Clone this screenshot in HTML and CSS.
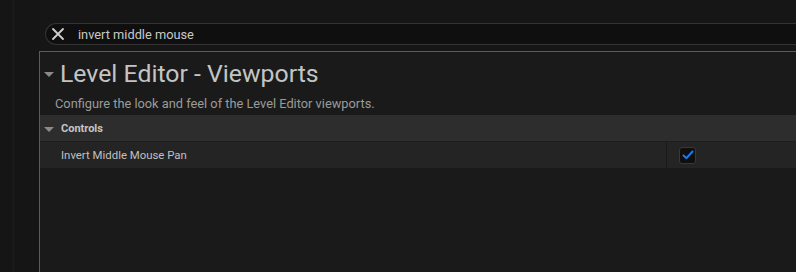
FILE: index.html
```html
<!DOCTYPE html>
<html lang="en">
<head>
  <meta charset="UTF-8" />
  <title>Editor Preferences</title>
  <link rel="stylesheet" href="styles.css">
</head>
<body>
  <div class="shell">
    <div class="sidebar"><div class="stripe"></div></div>
    <div class="main">
      <div class="topbar">
        <div class="search">
          <svg class="clear-icon" width="14" height="14" viewBox="0 0 14 14">
            <path d="M2 2 L12 12 M12 2 L2 12" stroke="#d0d0d0" stroke-width="1.8" stroke-linecap="round" />
          </svg>
          <span class="search-text">invert middle mouse</span>
        </div>
      </div>
      <div class="panel">
        <div class="title-row">
          <span class="arrow"></span>
          <h1 class="title">Level Editor - Viewports</h1>
        </div>
        <p class="description">Configure the look and feel of the Level Editor viewports.</p>
        <div class="category">
          <span class="arrow small"></span>
          <span class="category-name">Controls</span>
        </div>
        <div class="prop-row">
          <div class="prop-name">Invert Middle Mouse Pan</div>
          <div class="prop-value">
            <span class="checkbox">
              <svg width="12" height="10" viewBox="0 0 12 10">
                <path d="M1.5 5.5 L4.5 8.2 L10.5 1.5" fill="none" stroke="#1a7cf0" stroke-width="2" stroke-linecap="round" stroke-linejoin="round" />
              </svg>
            </span>
          </div>
        </div>
      </div>
    </div>
  </div>
</body>
</html>
```

FILE: styles.css
```css
* { box-sizing: border-box; margin: 0; padding: 0; }
html, body { height: 100%; }
body {
  background: #151515;
  font-family: Roboto, "Liberation Sans", sans-serif;
  overflow: hidden;
}
.shell {
  display: flex;
  height: 272px;
}
.sidebar {
  width: 39px;
  flex-shrink: 0;
  padding-left: 12px;
}
.stripe {
  width: 3px;
  height: 100%;
  background: #191919;
}
.main {
  flex: 1;
  display: flex;
  flex-direction: column;
  min-width: 0;
}
.topbar {
  height: 51px;
  padding: 23px 0 0 6px;
  background: #161616;
}
.search {
  height: 22px;
  display: flex;
  align-items: center;
  background: #0f0f0f;
  border: 1px solid #333333;
  border-right: none;
  border-radius: 11px 0 0 11px;
  padding-left: 5px;
}
.clear-icon { flex-shrink: 0; }
.search-text {
  margin-left: 13px;
  font-size: 12.8px;
  color: #c8c8c8;
}
.panel {
  flex: 1;
  background: #1a1a1a;
  border-left: 1px solid #1a6ab8;
  border-top: 1px solid #1a6ab8;
}
.title-row {
  display: flex;
  align-items: center;
  height: 43px;
  padding: 0 0 0 4px;
}
.arrow {
  width: 0;
  height: 0;
  border-left: 5px solid transparent;
  border-right: 5px solid transparent;
  border-top: 5px solid #8a8a8a;
  margin-top: 2px;
}
.title {
  margin-left: 6px;
  font-size: 24.8px;
  font-weight: 400;
  color: #c4c4c4;
}
.description {
  height: 20px;
  padding: 1px 0 0 15px;
  font-size: 12.8px;
  color: #9a9a9a;
}
.category {
  display: flex;
  align-items: center;
  height: 27px;
  padding-left: 4px;
  background: #2d2d2d;
  border-bottom: 1px solid #1e1e1e;
}
.category-name {
  margin-left: 7px;
  font-size: 11px;
  font-weight: 700;
  color: #c4c4c4;
}
.prop-row {
  display: flex;
  height: 26px;
  background: #242424;
}
.prop-name {
  width: 627px;
  padding-left: 21px;
  display: flex;
  align-items: center;
  font-size: 11.4px;
  color: #c0c0c0;
  border-right: 1px solid #1a1a1a;
}
.prop-value {
  display: flex;
  align-items: center;
  padding-left: 12px;
}
.checkbox {
  width: 17px;
  height: 17px;
  display: flex;
  align-items: center;
  justify-content: center;
  background: #0f0f0f;
  border: 1px solid #383838;
  border-radius: 3px;
}
```
